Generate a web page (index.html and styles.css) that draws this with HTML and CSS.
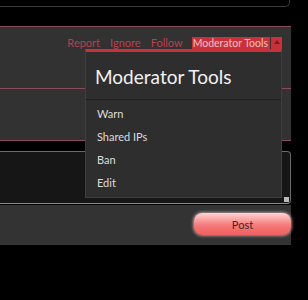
FILE: index.html
```html
<!DOCTYPE html>
<html>
<head>
<meta charset="utf-8">
<link rel="stylesheet" href="styles.css">
</head>
<body>
<div class="wrap">
  <div class="topbox"></div>
  <div class="panel">
    <div class="links">
      <a class="lnk">Report</a>
      <a class="lnk">Ignore</a>
      <a class="lnk">Follow</a>
      <span class="tab">Moderator Tools</span>
      <span class="arrow"><span class="tri"></span></span>
    </div>
    <div class="divider"></div>
    <div class="menu">
      <div class="menu-title">Moderator Tools</div>
      <ul class="menu-list">
        <li>Warn</li>
        <li>Shared IPs</li>
        <li>Ban</li>
        <li>Edit</li>
      </ul>
    </div>
  </div>
  <div class="textarea"><span class="grip"></span></div>
  <div class="submit">
    <button class="post">Post</button>
  </div>
</div>
</body>
</html>
```

FILE: styles.css
```css
html, body {
  margin: 0;
  padding: 0;
  background: #000;
  height: 300px;
  overflow: hidden;
}
.wrap {
  width: 291px;
  font-family: Lato, "Open Sans", sans-serif;
}
.topbox {
  height: 6px;
  margin-right: 1px;
  border: 1px solid #3c3c3c;
  border-top: none;
  border-left: none;
  border-bottom-right-radius: 5px;
}
.panel {
  position: relative;
  margin-top: 19px;
  background: #323232;
  border-top: 1px solid #8a4c5a;
  border-bottom: 1px solid #8a4c5a;
  height: 115px;
  padding-top: 10px;
  box-sizing: border-box;
}
.links {
  display: flex;
  justify-content: flex-end;
  align-items: center;
  padding-right: 9px;
  height: 12px;
  font-size: 11px;
  line-height: 12px;
}
.lnk {
  color: #b8404e;
  margin-left: 10px;
}
.tab {
  margin-left: 9px;
  background: #c9303a;
  color: #f3c2c2;
  padding: 0 2px 0 1px;
  font-size: 10.5px;
  height: 12px;
}
.arrow {
  margin-left: 1px;
  width: 11px;
  height: 12px;
  background: #c9303a;
  display: flex;
  justify-content: center;
  align-items: center;
}
.tri {
  width: 0;
  height: 0;
  border-left: 3px solid transparent;
  border-right: 3px solid transparent;
  border-bottom: 4px solid #7a1a1a;
  margin-bottom: 2px;
}
.divider {
  margin-top: 39px;
  height: 1px;
  background: #8a4c5a;
}
.menu {
  position: absolute;
  top: 22px;
  right: 9px;
  width: 197px;
  box-sizing: border-box;
  background: #2e2e2e;
  border: 1px solid #6a2a30;
  border-top: 3px solid #c9303a;
  z-index: 2;
}
.menu-title {
  font-size: 19px;
  line-height: 23px;
  color: #f2f2f2;
  padding: 13px 9px 11px;
  border-bottom: 1px solid #1e1e1e;
}
.menu-list {
  list-style: none;
  margin: 0;
  padding: 2px 0 3px;
}
.menu-list li {
  font-size: 11px;
  line-height: 23px;
  height: 23px;
  color: #dcdcdc;
  padding-left: 11px;
}
.textarea {
  position: relative;
  margin-top: 10px;
  margin-left: -4px;
  height: 53px;
  box-sizing: border-box;
  background: #161616;
  border: 1px solid #6a6a6a;
  border-bottom-color: #8a8a8a;
  border-radius: 4px;
}
.grip {
  position: absolute;
  right: 1px;
  bottom: 1px;
  width: 5px;
  height: 5px;
  background-image: radial-gradient(circle, #bbb 0.8px, transparent 1px);
  background-size: 2px 2px;
}
.submit {
  margin-top: 1px;
  height: 40px;
  background: #333;
  display: flex;
  justify-content: flex-end;
  align-items: flex-start;
  padding-top: 8px;
  box-sizing: border-box;
}
.post {
  width: 97px;
  height: 22px;
  border: none;
  border-radius: 8px;
  background: linear-gradient(#ffd4d4, #f57a7a 55%, #ef5f5f);
  box-shadow: 0 0 3px 1px rgba(255, 220, 220, 0.6);
  color: #3a2a2a;
  font-family: Lato, "Open Sans", sans-serif;
  font-size: 11px;
  padding: 0;
}
```
